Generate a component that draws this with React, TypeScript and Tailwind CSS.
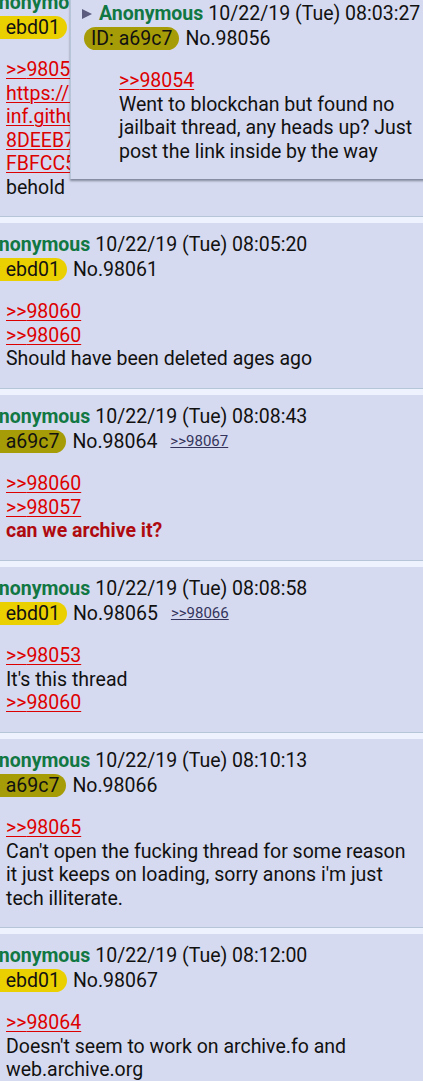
import React from 'react';

interface PostData {
  no: number;
  id: string;
  idColor: string;
  date: string;
  backlinks?: string[];
  body: React.ReactNode;
}

const font = { fontFamily: 'Roboto, "Noto Sans", sans-serif' };

function Quote({ to }: { to: string }) {
  return (
    <a className="block text-[#dd0000] underline underline-offset-2 decoration-1 w-fit">
      &gt;&gt;{to}
    </a>
  );
}

function Triangle() {
  return (
    <svg width="12" height="12" viewBox="0 0 12 12" className="shrink-0">
      <polygon points="1,1 11,6 1,11" fill="#5c5c7e" />
    </svg>
  );
}

function PostInner({ post }: { post: PostData }) {
  return (
    <>
      <div className="h-[25px] flex items-center whitespace-nowrap">
        <Triangle />
        <span className="ml-[6px] font-bold text-[#117743]">Anonymous</span>
        <span className="ml-[5px] text-[#111]">{post.date}</span>
      </div>
      <div className="h-[25px] ml-[3px] flex items-center whitespace-nowrap">
        <span
          className={`h-[23px] px-[7px] rounded-full flex items-center text-[#111] ${post.idColor}`}
        >
          ID: {post.id}
        </span>
        <span className="ml-[6px] text-[#111]">No.{post.no}</span>
        {post.backlinks?.map((b) => (
          <a key={b} className="ml-[13px] text-[15px] text-[#34345c] underline">
            &gt;&gt;{b}
          </a>
        ))}
      </div>
      <div className="ml-[38px] mt-[18px] text-[#111]">{post.body}</div>
    </>
  );
}

const posts: PostData[] = [
  {
    no: 98061,
    id: 'ebd01',
    idColor: 'bg-[#ebd001]',
    date: '10/22/19 (Tue) 08:05:20',
    body: (
      <>
        <Quote to="98060" />
        <Quote to="98060" />
        <div>Should have been deleted ages ago</div>
      </>
    ),
  },
  {
    no: 98064,
    id: 'a69c7',
    idColor: 'bg-[#a69c07]',
    date: '10/22/19 (Tue) 08:08:43',
    backlinks: ['98067'],
    body: (
      <>
        <Quote to="98060" />
        <Quote to="98057" />
        <div className="font-bold text-[#af0a0f]">can we archive it?</div>
      </>
    ),
  },
  {
    no: 98065,
    id: 'ebd01',
    idColor: 'bg-[#ebd001]',
    date: '10/22/19 (Tue) 08:08:58',
    backlinks: ['98066'],
    body: (
      <>
        <Quote to="98053" />
        <div>It's this thread</div>
        <Quote to="98060" />
      </>
    ),
  },
  {
    no: 98066,
    id: 'a69c7',
    idColor: 'bg-[#a69c07]',
    date: '10/22/19 (Tue) 08:10:13',
    body: (
      <>
        <Quote to="98065" />
        <div className="w-[412px]">
          Can't open the fucking thread for some reason it just keeps on loading, sorry anons
          i'm just tech illiterate.
        </div>
      </>
    ),
  },
  {
    no: 98067,
    id: 'ebd01',
    idColor: 'bg-[#ebd001]',
    date: '10/22/19 (Tue) 08:12:00',
    body: (
      <>
        <Quote to="98064" />
        <div className="w-[412px]">Doesn't seem to work on archive.fo and web.archive.org</div>
      </>
    ),
  },
];

const firstPost: PostData = {
  no: 98057,
  id: 'ebd01',
  idColor: 'bg-[#ebd001]',
  date: '10/22/19 (Tue) 08:04:02',
  body: (
    <>
      <Quote to="98053" />
      <div className="text-[#dd0000] underline underline-offset-2 decoration-1 whitespace-nowrap">
        <div>https://blockchan.</div>
        <div>inf.github.io/thread/</div>
        <div>8DEEB7A1C04F2E9D</div>
        <div>FBFCC5E3A7</div>
      </div>
      <div>behold</div>
    </>
  ),
};

const popupPost: PostData = {
  no: 98056,
  id: 'a69c7',
  idColor: 'bg-[#a69c07]',
  date: '10/22/19 (Tue) 08:03:27',
  body: (
    <>
      <Quote to="98054" />
      <div className="w-[300px]">
        Went to blockchan but found no jailbait thread, any heads up? Just post the link inside
        by the way
      </div>
    </>
  ),
};

function Post({ post }: { post: PostData }) {
  return (
    <div className="bg-[#d6daf0] border-b border-[#b7c5d9] pt-[9px] pb-[17.4px] mb-[6px]">
      <div className="-ml-[32px]">
        <PostInner post={post} />
      </div>
    </div>
  );
}

export default function App() {
  return (
    <div
      className="relative w-[423px] h-[1081px] overflow-hidden bg-[#eef2ff] text-[19.5px] leading-[23.5px]"
      style={font}
    >
      <div className="-mt-[19px]">
        <Post post={firstPost} />
        {posts.map((p) => (
          <Post key={p.no} post={p} />
        ))}
      </div>

      {/* Hover preview of the quoted post */}
      <div className="absolute left-[70px] -top-[8px] w-[400px] bg-[#d6daf0] border-l border-[#b7c5d9] shadow-[0_2px_2px_rgba(60,70,90,0.55)] pl-[10px] pt-[9px] pb-[16px]">
        <PostInner post={popupPost} />
      </div>
    </div>
  );
}
